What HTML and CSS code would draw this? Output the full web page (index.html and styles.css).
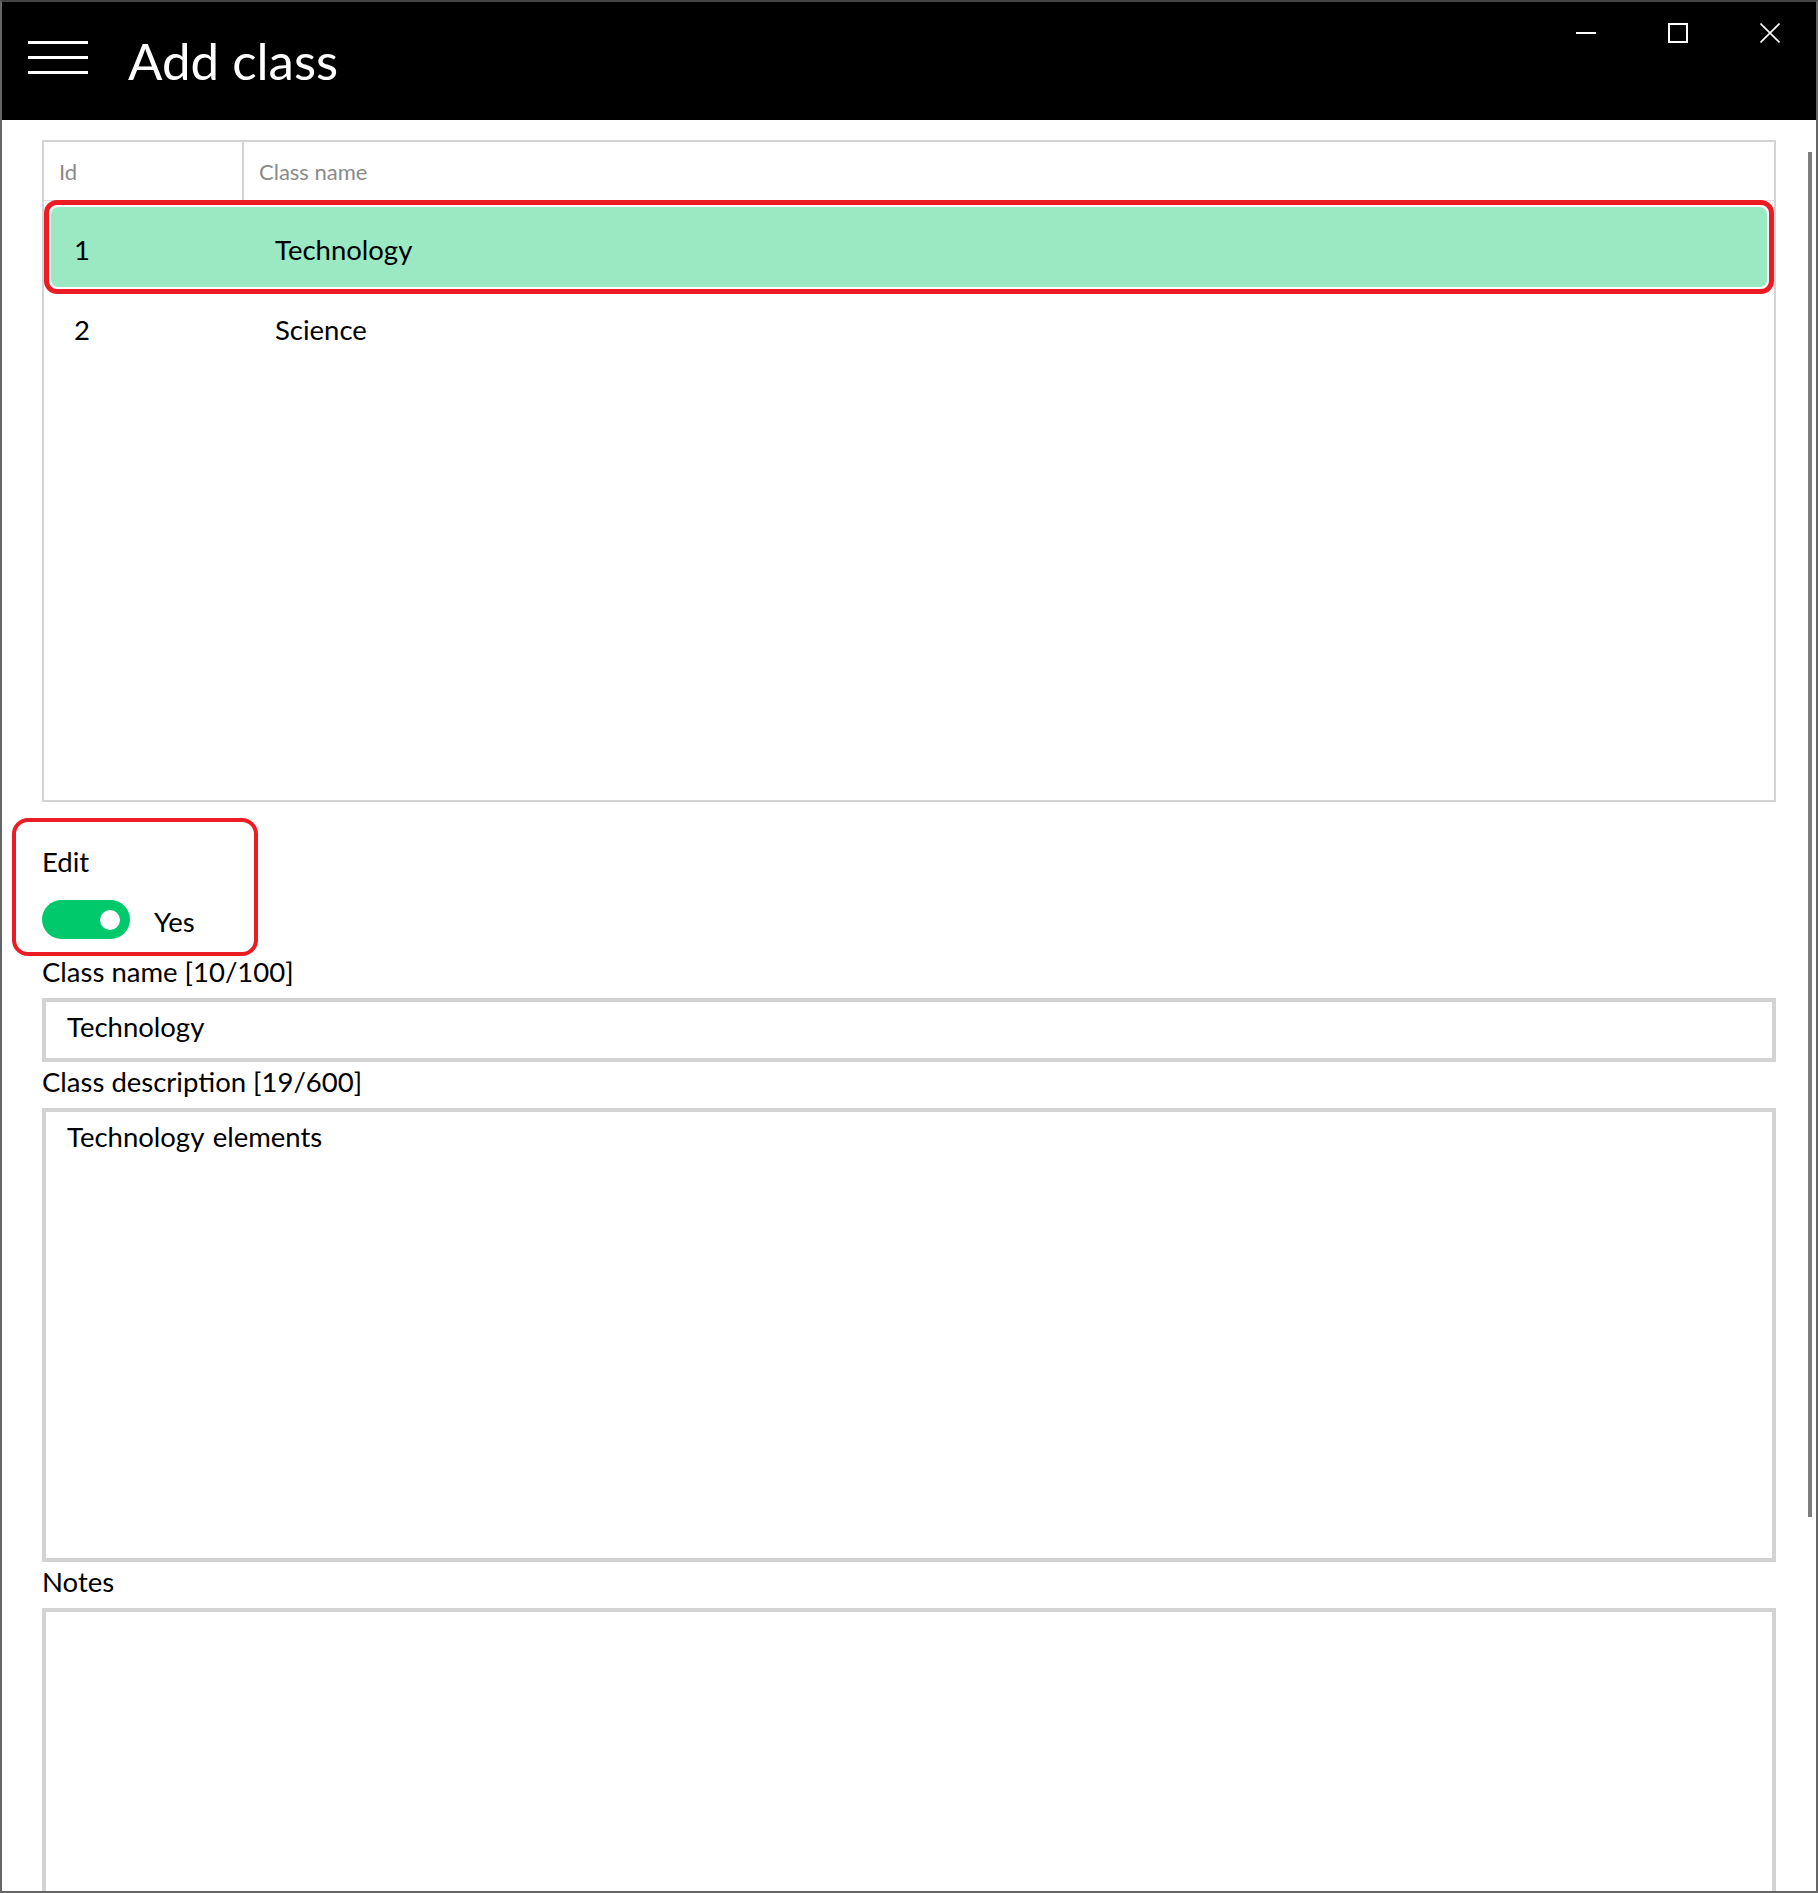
FILE: index.html
```html
<!DOCTYPE html>
<html lang="en">
<head>
<meta charset="utf-8">
<title>Add class</title>
<link rel="stylesheet" href="styles.css">
</head>
<body>
<div class="window">
  <header class="titlebar">
    <div class="hamburger"><span></span><span></span><span></span></div>
    <h1 class="title">Add class</h1>
    <div class="controls">
      <div class="ctrl">
        <svg width="20" height="20" viewBox="0 0 20 20"><rect x="0" y="9" width="20" height="2" fill="#fff"/></svg>
      </div>
      <div class="ctrl">
        <svg width="20" height="20" viewBox="0 0 20 20"><rect x="1" y="1" width="18" height="18" fill="none" stroke="#fff" stroke-width="2"/></svg>
      </div>
      <div class="ctrl">
        <svg width="20" height="20" viewBox="0 0 20 20"><path d="M0.5 0.5 L19.5 19.5 M19.5 0.5 L0.5 19.5" stroke="#fff" stroke-width="1.6" fill="none"/></svg>
      </div>
    </div>
  </header>
  <main class="content">
    <div class="grid">
      <div class="grid-head">
        <div class="hcell hcell-id">Id</div>
        <div class="hcell hcell-name">Class name</div>
      </div>
      <div class="row-ring">
        <div class="row row-selected">
          <div class="cell-id">1</div>
          <div class="cell-name">Technology</div>
        </div>
      </div>
      <div class="row row-plain">
        <div class="cell-id">2</div>
        <div class="cell-name">Science</div>
      </div>
    </div>

    <div class="edit-box">
      <div class="text-line">Edit</div>
      <div class="toggle-row">
        <div class="toggle"><div class="knob"></div></div>
        <span class="toggle-text">Yes</span>
      </div>
    </div>

    <div class="label label-first">Class name [10/100]</div>
    <div class="field field-single">Technology</div>

    <div class="label">Class description [19/600]</div>
    <div class="field field-multi">Technology elements</div>

    <div class="label">Notes</div>
    <div class="field field-notes"></div>

    <div class="scrollbar"></div>
  </main>
</div>
</body>
</html>
```

FILE: styles.css
```css
html, body {
  margin: 0;
  padding: 0;
  background: #ffffff;
}

body {
  font-family: Lato, "Open Sans", "Liberation Sans", sans-serif;
  color: #000;
}

.window {
  width: 1818px;
  height: 1893px;
  box-sizing: border-box;
  border: 2px solid #666666;
  border-top-color: #444444;
  display: flex;
  flex-direction: column;
  overflow: hidden;
  background: #fff;
}

.titlebar {
  height: 118px;
  flex-shrink: 0;
  background: #000;
  display: flex;
  align-items: flex-start;
  padding-left: 26px;
}

.hamburger {
  margin-top: 39px;
  width: 60px;
  display: flex;
  flex-direction: column;
  gap: 12px;
}

.hamburger span {
  display: block;
  height: 3px;
  background: #fff;
}

.title {
  margin: 29px 0 0 40px;
  font-size: 51px;
  line-height: 60px;
  font-weight: 400;
  color: #fff;
}

.controls {
  margin-left: auto;
  display: flex;
}

.ctrl {
  width: 92px;
  height: 62px;
  display: flex;
  align-items: center;
  justify-content: center;
}

.ctrl svg {
  display: block;
}

.content {
  position: relative;
  flex: 1;
  padding: 20px 40px 0 40px;
  overflow: hidden;
  display: flex;
  flex-direction: column;
}

.scrollbar {
  position: absolute;
  right: 4px;
  top: 32px;
  width: 4px;
  height: 1365px;
  background: #7d7d7d;
}

.grid {
  height: 662px;
  flex-shrink: 0;
  box-sizing: border-box;
  border: 2px solid #d4d4d4;
  display: flex;
  flex-direction: column;
}

.grid-head {
  height: 59px;
  box-sizing: border-box;
  border-bottom: 1px solid #dcdcdc;
  display: flex;
  font-size: 22px;
  color: #8a8a8a;
}

.hcell {
  display: flex;
  align-items: center;
  padding-left: 15px;
  box-sizing: border-box;
}

.hcell-id {
  width: 200px;
  border-right: 2px solid #d4d4d4;
}

.row-ring {
  margin-top: -1px;
  border: 5px solid #ec1c24;
  border-radius: 13px;
  padding: 2px;
  background: #fff;
}

.row {
  display: flex;
  align-items: center;
  font-size: 27.5px;
  line-height: 32px;
  box-sizing: border-box;
}

.row-selected {
  height: 80px;
  background: #9ae9c2;
  border-radius: 7px;
  padding: 5px 0 0 23px;
}

.row-plain {
  height: 72px;
  padding-left: 30px;
}

.cell-id {
  width: 201px;
}

.edit-box {
  margin: 16px 0 0 -30px;
  width: 246px;
  box-sizing: border-box;
  border: 4px solid #ec1c24;
  border-radius: 16px;
  padding: 24px 0 13px 26px;
  flex-shrink: 0;
}

.text-line {
  font-size: 27.5px;
  line-height: 32px;
}

.toggle-row {
  display: flex;
  align-items: center;
  gap: 24px;
  margin-top: 22px;
}

.toggle {
  width: 88px;
  height: 39px;
  border-radius: 20px;
  background: #00c96b;
  display: flex;
  align-items: center;
  justify-content: flex-end;
  padding-right: 10px;
  box-sizing: border-box;
}

.knob {
  width: 20px;
  height: 20px;
  border-radius: 50%;
  background: #fff;
}

.toggle-text {
  font-size: 27.5px;
  line-height: 32px;
  padding-top: 4px;
}

.label {
  font-size: 27.5px;
  line-height: 32px;
  margin: 4px 0 10px 0;
  flex-shrink: 0;
}

.label-first {
  margin-top: 0;
}

.field {
  border: 4px solid #d3d3d3;
  box-sizing: border-box;
  padding: 9px 21px;
  font-size: 27.5px;
  line-height: 32px;
  word-spacing: 2px;
  flex-shrink: 0;
}

.field-single {
  height: 64px;
}

.field-multi {
  height: 454px;
}

.field-notes {
  height: 454px;
}
```
